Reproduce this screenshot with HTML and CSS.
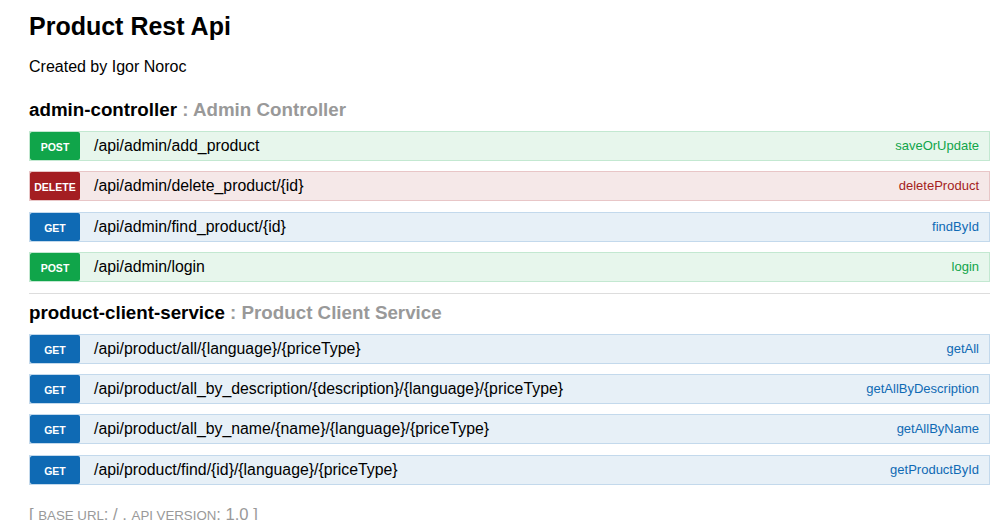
FILE: index.html
```html
<!DOCTYPE html>
<html>
<head>
<meta charset="utf-8">
<link rel="stylesheet" href="styles.css">
</head>
<body>
<div class="wrap">
  <h1 class="title">Product Rest Api</h1>
  <div class="desc">Created by Igor Noroc</div>

  <section class="resource">
    <h2 class="res-head">admin-controller <span class="res-sub">: Admin Controller</span></h2>
    <ul class="ops">
      <li class="op post"><span class="method">POST</span><span class="path">/api/admin/add_product</span><span class="nick">saveOrUpdate</span></li>
      <li class="op delete"><span class="method">DELETE</span><span class="path">/api/admin/delete_product/{id}</span><span class="nick">deleteProduct</span></li>
      <li class="op get"><span class="method">GET</span><span class="path">/api/admin/find_product/{id}</span><span class="nick">findById</span></li>
      <li class="op post"><span class="method">POST</span><span class="path">/api/admin/login</span><span class="nick">login</span></li>
    </ul>
  </section>

  <section class="resource last">
    <h2 class="res-head">product-client-service <span class="res-sub">: Product Client Service</span></h2>
    <ul class="ops">
      <li class="op get"><span class="method">GET</span><span class="path">/api/product/all/{language}/{priceType}</span><span class="nick">getAll</span></li>
      <li class="op get"><span class="method">GET</span><span class="path">/api/product/all_by_description/{description}/{language}/{priceType}</span><span class="nick">getAllByDescription</span></li>
      <li class="op get"><span class="method">GET</span><span class="path">/api/product/all_by_name/{name}/{language}/{priceType}</span><span class="nick">getAllByName</span></li>
      <li class="op get"><span class="method">GET</span><span class="path">/api/product/find/{id}/{language}/{priceType}</span><span class="nick">getProductById</span></li>
    </ul>
  </section>

  <h4 class="footer">[ <span class="sc">base url</span>: / , <span class="sc">api version</span>: 1.0 ]</h4>
</div>
</body>
</html>
```

FILE: styles.css
```css
html, body {
  margin: 0;
  padding: 0;
  background: #fff;
}
body {
  font-family: "Liberation Sans", Arial, sans-serif;
  color: #000;
  overflow: hidden;
}
.wrap {
  padding: 0 10px 0 29px;
}
.title {
  margin: 11px 0 0 0;
  font-size: 25px;
  line-height: 30px;
  font-weight: bold;
}
.desc {
  margin-top: 16px;
  font-size: 16px;
  line-height: 20px;
}
.resource {
  border-bottom: 1px solid #ddd;
}
.resource.last {
  border-bottom: none;
}
.res-head {
  margin: 21px 0 9px 0;
  font-size: 18.75px;
  line-height: 24px;
  font-weight: bold;
}
.resource.last .res-head {
  margin-top: 7px;
}
.res-sub {
  color: #999;
}
.ops {
  list-style: none;
  margin: 0;
  padding: 0;
}
.op {
  display: flex;
  align-items: center;
  height: 30px;
  box-sizing: border-box;
  border: 1px solid;
  margin-bottom: 10.4px;
}
.method {
  width: 50px;
  height: 28px;
  box-sizing: border-box;
  padding-top: 2px;
  line-height: 26px;
  text-align: center;
  color: #fff;
  font-size: 10.5px;
  font-weight: bold;
  border-radius: 2px;
  flex: none;
}
.path {
  margin-left: 14px;
  font-size: 15.83px;
  line-height: 28px;
  flex: 1;
  white-space: nowrap;
}
.nick {
  padding-right: 10px;
  font-size: 13px;
  line-height: 28px;
}
.post { background: #e7f6ec; border-color: #c3e8d1; }
.post .method { background: #10a54a; }
.post .nick { color: #10a54a; }
.delete { background: #f5e8e8; border-color: #e8c6c7; }
.delete .method { background: #a41e22; }
.delete .nick { color: #a41e22; }
.get { background: #e7f0f7; border-color: #c3d9ec; }
.get .method { background: #0f6ab4; }
.get .nick { color: #0f6ab4; }
.footer {
  margin: 20px 0 0 0;
  font-size: 16.6px;
  line-height: 20px;
  font-weight: normal;
  color: #999;
}
.sc {
  text-transform: uppercase;
  font-size: 0.8em;
}
```
